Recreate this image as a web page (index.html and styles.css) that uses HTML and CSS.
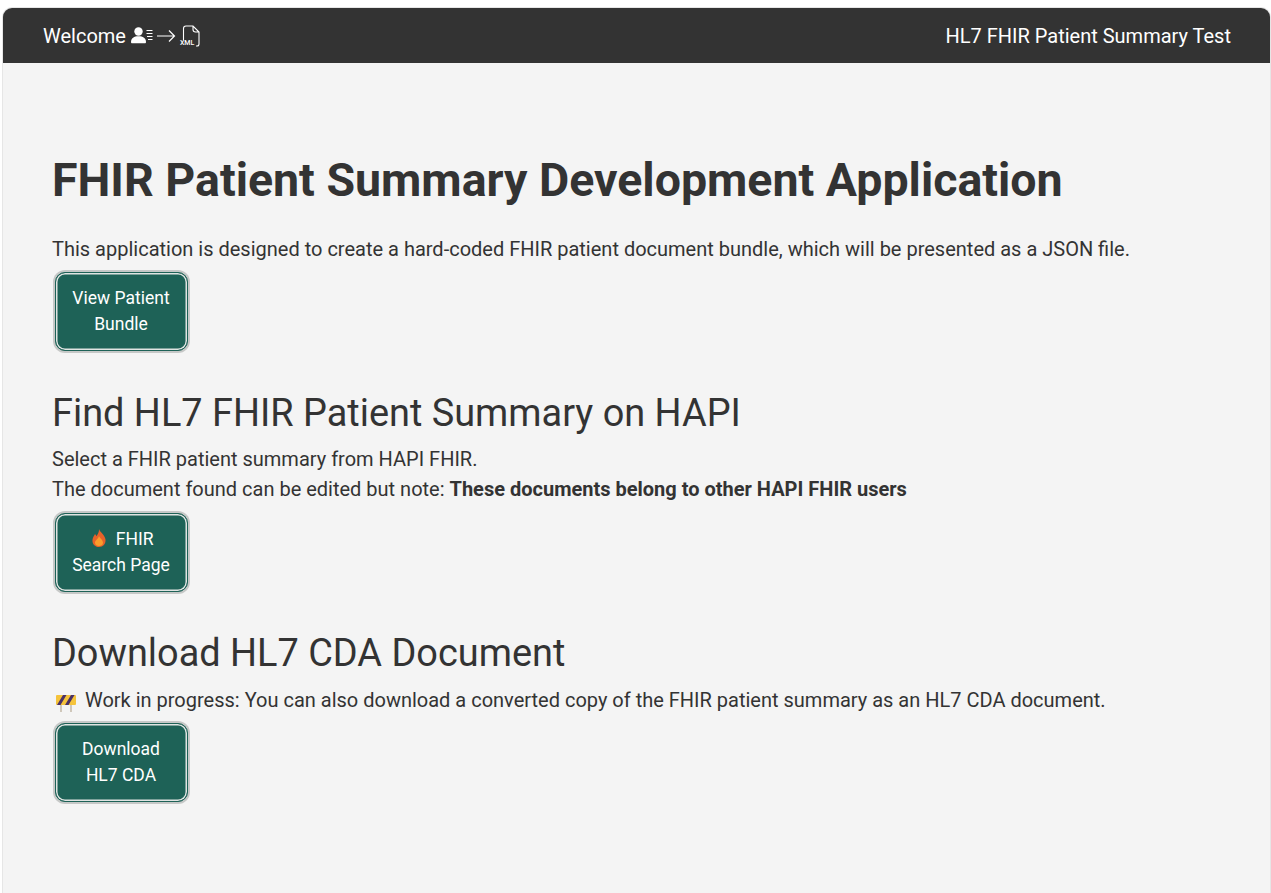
FILE: index.html
```html
<!DOCTYPE html>
<html lang="en">
<head>
    <meta charset="UTF-8">
    <meta name="viewport" content="width=device-width, initial-scale=1.0">
    <title>HL7 FHIR Patient Summary Test</title>
    <link rel="stylesheet" href="styles.css">
</head>
<body>
    <div class="page">
        <nav class="topbar">
            <div class="brand">
                <span>Welcome</span>
                <svg class="icon-user" width="22" height="17" viewBox="0 0 22 17">
                    <circle cx="7.5" cy="4.500" r="4.200" fill="#fff"/>
                    <path d="M0 15c0-3.800 3-5.800 7.500-5.800s7.500 2 7.500 5.800c0 .8-.5 1.300-1.200 1.300H1.200C.5 16.300 0 15.800 0 15z" fill="#fff"/>
                    <path d="M15.500 3.500h6M15.500 6.500h6M16 9.500h5.500M17 12.500h4.500" stroke="#fff" stroke-width="1.200" fill="none"/>
                </svg>
                <svg class="icon-arrow" width="19" height="14" viewBox="0 0 19 14">
                    <path d="M0 7h17.500M12 1.500L17.500 7 12 12.500" stroke="#fff" stroke-width="1.200" fill="none"/>
                </svg>
                <span class="file-icon">
                    <svg width="19" height="22" viewBox="0 0 19 22">
                        <path d="M2.500 15V3.500C2.500 2 3.500 1 5 1h7l6 6v12c0 1.300-.7 2-2 2h-1M12 1v3.500C12 6 13 7 14.500 7H18" stroke="#fff" stroke-width="1.100" fill="none"/>
                    </svg>
                    <span class="file-label">XML</span>
                </span>
            </div>
            <div class="app-title">HL7 FHIR Patient Summary Test</div>
        </nav>
        <main class="content">
            <h1>FHIR Patient Summary Development Application</h1>
            <p>This application is designed to create a hard-coded FHIR patient document bundle, which will be presented as a JSON file.</p>
            <a class="btn" href="#">View Patient<br>Bundle</a>

            <h2>Find HL7 FHIR Patient Summary on HAPI</h2>
            <p>Select a FHIR patient summary from HAPI FHIR.<br>
            The document found can be edited but note: <strong>These documents belong to other HAPI FHIR users</strong></p>
            <a class="btn" href="#">
                <svg class="icon-fire" width="14" height="18" viewBox="0 0 14 18">
                    <path d="M7 0c.6 3 5.800 5.500 6.500 10.500C14 15 11 18 7 18s-7-3-6.500-7.300C.8 8 2.300 6.800 3 5c.8.800 1.200 1.500 1.400 2.300C5.800 5.500 7.200 3 7 0z" fill="#e8622a"/>
                    <path d="M7 7c.5 1.800 4 3.800 4 6.800C11 16 9 17 7 17s-4-1-4-3.200C3 11 6.400 10 7 7z" fill="#fb9d2b"/>
                </svg>
                FHIR<br>Search Page</a>

            <h2>Download HL7 CDA Document</h2>
            <p>
                <svg class="icon-barrier" width="20" height="18" viewBox="0 0 20 18">
                    <path d="M5 1v17M15 1v17" stroke="#cfc7ba" stroke-width="2"/>
                    <rect x="0" y="1" width="20" height="10" rx="1" fill="#f5c33b"/>
                    <path d="M1 11l6-10h3.500l-6 10zM9 11l6-10h3.500l-6 10z" fill="#4a3168"/>
                </svg>
                Work in progress: You can also download a converted copy of the FHIR patient summary as an HL7 CDA document.
            </p>
            <a class="btn" href="#">Download<br>HL7 CDA</a>
        </main>
    </div>
</body>
</html>
```
FILE: styles.css
```css
html, body { height: 100%; }
body {
    margin: 0;
    padding: 7px 0 0 2px;
    box-sizing: border-box;
    background-color: #fff;
    color: #333;
    font-family: Roboto, "Liberation Sans", sans-serif;
    overflow: hidden;
}
.page {
    height: 100%;
    box-sizing: border-box;
    background-color: #f4f4f4;
    border: 1px solid #e6e6e6;
    border-bottom: none;
    border-radius: 10px 10px 0 0;
    overflow: hidden;
}
.topbar {
    display: flex;
    justify-content: space-between;
    align-items: center;
    height: 55px;
    padding: 0 39px 0 40px;
    background-color: #333;
    color: #fff;
    font-size: 20px;
}
.brand { display: flex; align-items: center; gap: 4px; }
.icon-user { margin-left: 1px; }
.file-icon { position: relative; display: block; width: 19px; height: 22px; margin-left: 1px; }
.file-icon svg { display: block; }
.file-label { position: absolute; left: -1px; bottom: 0; font-size: 7px; font-weight: 500; line-height: 7px; }
.content { padding: 88px 49px 0; font-size: 20px; line-height: 30px; }
h1 { margin: 0 0 24.8px; font-size: 46.5px; font-weight: 700; line-height: 58px; }
h2 { margin: 39.4px 0 8.2px; font-size: 37.9px; font-weight: 400; line-height: 45.5px; }
p { margin: 0; }
strong { font-weight: 700; }
.btn {
    display: block;
    box-sizing: border-box;
    width: 133px;
    height: 79px;
    margin: 8.4px 0 0 3px;
    padding: 12px 1px 0 0;
    background-color: #1e6257;
    border: 1px solid #1e6257;
    border-radius: 10px;
    box-shadow: inset 0 0 0 1.500px #e0e4e2, 0 0 0 2px #c6c8c7;
    color: #fff;
    font-size: 17.5px;
    line-height: 26px;
    text-align: center;
    text-decoration: none;
}
.icon-fire { vertical-align: -2px; margin: 0 5px 0 4px; }
.icon-barrier { vertical-align: -5px; margin: 0 4px; }
```
